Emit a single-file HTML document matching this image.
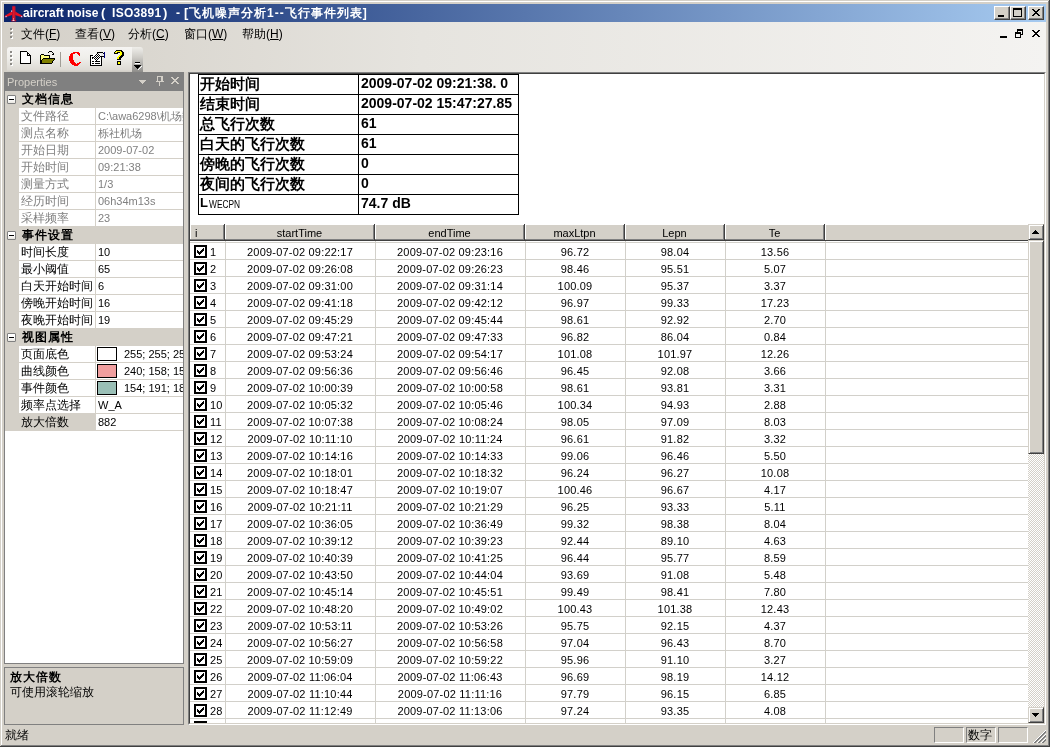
<!DOCTYPE html>
<html><head><meta charset="utf-8">
<style>
*{margin:0;padding:0;box-sizing:border-box}
html,body{width:1050px;height:747px;overflow:hidden;background:#d4d0c8;font-family:"Liberation Sans",sans-serif;font-size:11px;color:#000;position:relative}
.a{position:absolute}
.tt{color:#fff;font-weight:bold;font-size:12px;line-height:12px}
.t{position:absolute;white-space:nowrap;line-height:1}
#title{left:4px;top:4px;width:1042px;height:18px;background:linear-gradient(to right,#0a246a,#a6caf0)}
.tb{position:absolute;top:6px;width:16px;height:14px;background:#d4d0c8;border-top:1px solid #fff;border-left:1px solid #fff;border-right:1px solid #404040;border-bottom:1px solid #404040;box-shadow:inset -1px -1px 0 #808080}
#menubar{left:4px;top:22px;width:1042px;height:50px;background:linear-gradient(to right,#d4d0c8 0%,#e6e4df 40%,#f4f3f1 100%)}
.mi{position:absolute;top:28px;font-size:12px;line-height:12px}
#toolbar{left:7px;top:47px;width:125px;height:25px;border-radius:3px 0 0 0;background:linear-gradient(to bottom,#f6f5f3 0%,#efeeea 45%,#dedbd5 90%,#cfccc5 100%)}
#tbover{left:132px;top:47px;width:11px;height:25px;border-radius:0 3px 0 0;background:linear-gradient(to bottom,#efeeea 0%,#cfcdc8 40%,#8e8d8a 100%)}
#prophdr{left:4px;top:72px;width:180px;height:18px;background:#808080}
#pgrid{left:4px;top:90px;width:180px;height:574px;border:1px solid #808080;background:#fff}
.pcat{position:absolute;left:5px;width:178px;height:17px;background:#d4d0c8}
.pcatt{position:absolute;left:17px;top:2px;font-size:12px;line-height:12px;font-weight:bold;letter-spacing:1px;white-space:nowrap}
.mbox{position:absolute;left:2px;top:4px;width:9px;height:9px;border:1px solid #808080;border-radius:1px;background:linear-gradient(to bottom,#fff 50%,#e8e6e0)}
.mminus{position:absolute;left:1px;top:3px;width:5px;height:1px;background:#000}
.prow{position:absolute;left:5px;width:178px;height:17px;background:#d4d0c8}
.pname{position:absolute;left:14px;top:0;width:76px;height:16px;font-size:12px;line-height:12px;padding:2px 0 0 2px;white-space:nowrap;overflow:hidden}
.pval{position:absolute;left:91px;top:0;width:87px;height:16px;background:#fff;white-space:nowrap;overflow:hidden}
.pvt{position:absolute;left:2px;top:2px;font-size:11px;line-height:12px}
.sw{position:absolute;left:1px;top:1px;width:20px;height:14px;border:1px solid #000}
#desc{left:4px;top:667px;width:180px;height:58px;border:1px solid #808080;background:#d4d0c8}
#mainv{left:188px;top:72px;width:858px;height:653px;border-top:1px solid #808080;border-left:1px solid #808080;border-right:1px solid #fff;border-bottom:1px solid #fff}
#maini{left:189px;top:73px;width:856px;height:651px;border-top:1px solid #404040;border-left:1px solid #404040;border-right:1px solid #d4d0c8;border-bottom:1px solid #d4d0c8;background:#fff}
.sb{position:absolute;top:727px;height:16px;border-top:1px solid #808080;border-left:1px solid #808080;border-right:1px solid #fff;border-bottom:1px solid #fff}
.st1{position:absolute;left:200px;font-size:15px;line-height:15px;font-weight:bold;white-space:nowrap}
.st2{position:absolute;left:361px;font-size:14px;line-height:14px;font-weight:bold;white-space:nowrap}
.lh{position:absolute;top:225px;height:16px;background:#d4d0c8;border-right:1px solid #404040;border-bottom:1px solid #404040;box-shadow:inset -1px -1px 0 #808080, inset 1px 0 0 #fff;font-size:11px;line-height:16px;text-align:center}
.gl{position:absolute;left:190px;width:838px;height:1px;background:#d2d0ca}
.vl{position:absolute;top:241px;width:1px;height:482px;background:#d2d0ca}
.lr{position:absolute;left:190px;width:838px;height:16px;font-size:11px;line-height:18px;letter-spacing:0.2px}
.lr span{position:absolute;top:0;text-align:center;white-space:nowrap}
.lr .cb{left:4px;top:2px;width:13px;height:13px;border:2px solid #000;background:#fff}
.ck{position:absolute;left:1px;top:1px}
.lr .c0{left:20px;text-align:left}
.lr .c1{left:35px;width:150px}
.lr .c2{left:185px;width:150px}
.lr .c3{left:335px;width:100px}
.lr .c4{left:435px;width:100px}
.lr .c5{left:535px;width:100px}
#vsb{left:1028px;top:224px;width:16px;height:499px;background:repeating-conic-gradient(#d4d0c8 0 25%,#fff 0 50%) 0 0/2px 2px}
.sbtn{position:absolute;left:1028px;width:16px;height:16px;background:#d4d0c8;border-top:1px solid #d4d0c8;border-left:1px solid #d4d0c8;border-right:1px solid #404040;border-bottom:1px solid #404040;box-shadow:inset 1px 1px 0 #fff, inset -1px -1px 0 #808080}
.wrap{position:absolute;left:0;top:0;width:1050px;height:747px;will-change:transform}
</style></head><body><div class="wrap">
<!-- window frame -->
<div class="a" style="left:1px;top:1px;width:1px;height:744px;background:#fff"></div>
<div class="a" style="left:1px;top:1px;width:1047px;height:1px;background:#fff"></div>
<div class="a" style="left:1048px;top:1px;width:1px;height:745px;background:#808080"></div>
<div class="a" style="left:1049px;top:0;width:1px;height:747px;background:#404040"></div>
<div class="a" style="left:1px;top:745px;width:1048px;height:1px;background:#808080"></div>
<div class="a" style="left:0;top:746px;width:1050px;height:1px;background:#404040"></div>

<div id="title" class="a"></div>
<div class="t tt" style="left:23px;top:7px">aircraft noise</div>
<div class="t tt" style="left:101px;top:6px;font-size:13px">(</div>
<div class="t tt" style="left:112px;top:7px;letter-spacing:0.3px">ISO3891</div>
<div class="t tt" style="left:163px;top:6px;font-size:13px">)</div>
<div class="t tt" style="left:176px;top:7px">-</div>
<div class="t tt" style="left:184px;top:6px;font-size:13px">[</div>
<div class="t tt" style="left:189px;top:7px;letter-spacing:1px">飞机噪声分析1--飞行事件列表]</div>
<div class="tb" style="left:994px"></div>
<div class="tb" style="left:1010px"></div>
<div class="tb" style="left:1028px"></div>

<div id="menubar" class="a"></div>
<!-- plane icon -->
<svg class="a" style="left:4px;top:4px" width="20" height="18" viewBox="0 0 20 18">
<path d="M9.5 6.5 L18.5 11.8 L18.5 13.5 L9.5 10.5 L0.8 13.5 L0.8 11.8 Z" fill="#e81020"/>
<path d="M8 2.5 Q9.7 0.8 11.5 2.5 L11.5 16 L8 16 Z" fill="#b01438"/>
<rect x="9" y="3" width="1.5" height="12" fill="#e01828"/>
<path d="M7 16 L12.5 16 L12 17.6 L7.5 17.6 Z" fill="#a01030"/>
<rect x="1.5" y="12" width="1.2" height="1.2" fill="#c8d0ff"/><rect x="17" y="12" width="1.2" height="1.2" fill="#c8d0ff"/><rect x="7" y="6.5" width="1.2" height="1.2" fill="#ffd0e0"/><rect x="9" y="14.5" width="1" height="1" fill="#ffd0e0"/><rect x="8.5" y="16" width="2" height="1" fill="#ffc0d0"/>
</svg>
<!-- title buttons glyphs -->
<div class="a" style="left:998px;top:15px;width:6px;height:2px;background:#000"></div>
<div class="a" style="left:1013px;top:8px;width:9px;height:9px;border:1px solid #000;border-top-width:2px"></div>
<svg class="a" style="left:1032px;top:9px" width="8" height="7" viewBox="0 0 8 7" shape-rendering="crispEdges"><path d="M0 0h2v1h-2zM6 0h2v1h-2zM1 1h2v1h-2zM5 1h2v1h-2zM2 2h4v1h-4zM3 3h2v1h-2zM2 4h4v1h-4zM1 5h2v1h-2zM5 5h2v1h-2zM0 6h2v1h-2zM6 6h2v1h-2z" fill="#000"/></svg>
<!-- MDI buttons -->
<div class="a" style="left:1000px;top:36px;width:7px;height:2px;background:#000"></div>
<div class="a" style="left:1017px;top:29px;width:6px;height:6px;border:1px solid #000;border-top-width:2px"></div>
<div class="a" style="left:1015px;top:32px;width:6px;height:6px;border:1px solid #000;border-top-width:2px;background:#f4f3f1"></div>
<svg class="a" style="left:1032px;top:30px" width="8" height="7" viewBox="0 0 8 7" shape-rendering="crispEdges"><path d="M0 0h2v1h-2zM6 0h2v1h-2zM1 1h2v1h-2zM5 1h2v1h-2zM2 2h4v1h-4zM3 3h2v1h-2zM2 4h4v1h-4zM1 5h2v1h-2zM5 5h2v1h-2zM0 6h2v1h-2zM6 6h2v1h-2z" fill="#000"/></svg>
<!-- menu grip -->
<svg class="a" style="left:10px;top:28px" width="3" height="11" shape-rendering="crispEdges"><path d="M1 1h2v2h-2zM1 5h2v2h-2zM1 9h2v2h-2z" fill="#fff"/><path d="M0 0h2v2h-2zM0 4h2v2h-2zM0 8h2v2h-2z" fill="#8c8a86"/></svg>

<div class="mi" style="left:21px">文件(<u>F</u>)</div>
<div class="mi" style="left:75px">查看(<u>V</u>)</div>
<div class="mi" style="left:128px">分析(<u>C</u>)</div>
<div class="mi" style="left:184px">窗口(<u>W</u>)</div>
<div class="mi" style="left:242px">帮助(<u>H</u>)</div>

<div id="toolbar" class="a"></div>
<div id="tbover" class="a"></div>
<!-- toolbar grip -->
<svg class="a" style="left:10px;top:51px" width="3" height="15" shape-rendering="crispEdges"><path d="M1 1h2v2h-2zM1 5h2v2h-2zM1 9h2v2h-2zM1 13h2v2h-2z" fill="#fff"/><path d="M0 0h2v2h-2zM0 4h2v2h-2zM0 8h2v2h-2zM0 12h2v2h-2z" fill="#8c8a86"/></svg>
<!-- new doc -->
<svg class="a" style="left:20px;top:51px" width="11" height="13" shape-rendering="crispEdges"><path d="M1 1h6v1h1v1h1v1h1v8h-9z" fill="#fff"/><path d="M0 0h7v1h-6v11h9v-8h1v9h-11zM7 1h1v1h-1zM8 2h1v1h-1zM9 3h1v1h-1zM7 1h1v3h2v1h-3z" fill="#000"/></svg>
<!-- open folder -->
<svg class="a" style="left:40px;top:50px" width="16" height="14" shape-rendering="crispEdges">
<path d="M9 1h3v1h-3zM12 2h1v1h-1zM13 3h1v2h-1zM12 4h1v1h-1zM8 2h1v1h-1z" fill="#000"/>
<path d="M1 4h3v1h-3zM0 5h1v9h-1zM4 5h5v1h-5zM9 5h1v3h-1zM1 13h11v1h-11zM3 8h12v1h-12zM14 9h1v1h-1zM13 10h1v1h-1zM12 11h1v2h-1zM2 9h1v1h-1zM1 10h1v3h-1z" fill="#000"/>
<path d="M1 5h3v1h5v2h-6v1h-1v1h-1z" fill="#ffff80"/>
<path d="M3 9h11v1h-1v1h-1v2h-10v-3h1z" fill="#808000"/>
</svg>
<div class="a" style="left:60px;top:52px;width:1px;height:15px;background:#a09d96"></div>
<!-- C -->
<svg class="a" style="left:68px;top:51px" width="14" height="16" shape-rendering="crispEdges"><path d="M5 1h6v1h-6zM3 2h4v1h-4zM9 2h3v1h-3zM2 3h3v1h-3zM10 3h2v1h-2zM2 4h3v1h-3zM11 4h1v1h-1zM1 5h4v1h-4zM1 6h4v1h-4zM1 7h4v1h-4zM1 8h4v1h-4zM1 9h5v1h-5zM2 10h4v1h-4zM2 11h5v1h-5zM11 11h2v1h-2zM3 12h5v1h-5zM9 12h3v1h-3zM4 13h7v1h-7zM6 14h4v1h-4z" fill="#f00"/></svg>
<!-- properties icon -->
<svg class="a" style="left:88px;top:50px" width="18" height="18" shape-rendering="crispEdges">
<path d="M2 5h12v11h-12z" fill="#000"/><path d="M3 6h10v9h-10z" fill="#fff"/>
<path d="M4 11h2v1h-2zM7 11h5v1h-5zM4 13h2v1h-2zM7 13h5v1h-5zM4 7h1v2h-1zM5 8h1v1h-1z" fill="#000"/>
<path d="M9 2h6v1h-6z" fill="#000"/><path d="M10 3h5v3h-5z" fill="#e8e8e8"/><path d="M16 2h1v6h-1z" fill="#000080"/><path d="M15 3h1v1h-1zM15 6h1v1h-1zM12 6h3v1h-3z" fill="#000"/>
<path d="M5 4h8v5h-8z" fill="#fff"/>
<path d="M9 3h1v1h-1zM8 4h1v1h-1zM10 4h1v1h-1zM7 5h1v1h-1zM9 5h1v1h-1zM11 5h1v1h-1zM6 6h1v1h-1zM8 6h1v1h-1zM10 6h1v1h-1zM12 6h1v1h-1zM5 7h1v1h-1zM7 7h1v1h-1zM9 7h1v1h-1zM11 7h1v1h-1zM6 8h1v1h-1zM8 8h1v1h-1zM10 8h1v1h-1zM7 9h1v1h-1zM9 9h1v1h-1zM8 10h1v1h-1z" fill="#000"/>
</svg>
<!-- help ? -->
<svg class="a" style="left:113px;top:50px" width="12" height="15" shape-rendering="crispEdges">
<path d="M3 0h6v1h1v1h1v4h-1v1h-1v1h-1v2h-4v-3h1v-1h1v-1h1v-2h-2v1h-4v-2h1v-1h1z" fill="#000"/>
<path d="M4 1h4v1h1v3h-1v1h-1v1h-1v2h-2v-2h1v-1h1v-1h1v-3h-3v1h-2v-1h1v-1h1z" fill="#ffff00"/>
<path d="M4 11h4v4h-4z" fill="#000"/><path d="M5 12h2v2h-2z" fill="#ffff00"/>
</svg>
<!-- overflow glyph -->
<svg class="a" style="left:134px;top:62px" width="8" height="8" shape-rendering="crispEdges"><path d="M1 0h5v1h-5zM0 3h7v1h-7zM1 4h5v1h-5zM2 5h3v1h-3zM3 6h1v1h-1z" fill="#000"/><path d="M1 1h5v1h-5zM7 4h1v1h-1zM6 5h1v1h-1zM5 6h1v1h-1zM4 7h1v1h-1z" fill="#fff"/></svg>


<div id="prophdr" class="a"></div>
<div class="t" style="left:7px;top:77px;color:#d4d0c8;font-size:11px">Properties</div>

<svg class="a" style="left:139px;top:80px" width="8" height="4" shape-rendering="crispEdges"><path d="M0 0h7v1h-7zM1 1h5v1h-5zM2 2h3v1h-3zM3 3h1v1h-1z" fill="#d4d0c8"/></svg>
<svg class="a" style="left:156px;top:76px" width="8" height="10" shape-rendering="crispEdges"><path d="M1 0h6v1h-6zM1 1h1v4h-1zM5 1h2v4h-2zM0 5h8v1h-8zM3 6h1v4h-1z" fill="#d4d0c8"/></svg>
<svg class="a" style="left:171px;top:77px" width="8" height="7" shape-rendering="crispEdges"><path d="M0 0h2v1h-2zM6 0h2v1h-2zM1 1h2v1h-2zM5 1h2v1h-2zM2 2h4v1h-4zM3 3h2v1h-2zM2 4h4v1h-4zM1 5h2v1h-2zM5 5h2v1h-2zM0 6h2v1h-2zM6 6h2v1h-2z" fill="#d4d0c8"/></svg>
<div id="pgrid" class="a"></div>
<div id="desc" class="a"></div>
<div class="t" style="left:10px;top:671px;font-size:12px;font-weight:bold;letter-spacing:1px">放大倍数</div>
<div class="t" style="left:10px;top:686px;font-size:12px">可使用滚轮缩放</div>

<div id="mainv" class="a"></div>
<div id="maini" class="a"></div>

<div class="a" style="left:198px;top:74px;width:321px;height:141px;border:1px solid #000"></div>
<div class="a" style="left:358px;top:74px;width:1px;height:141px;background:#000"></div>
<div class="a" style="left:198px;top:94px;width:321px;height:1px;background:#000"></div>
<div class="a" style="left:198px;top:114px;width:321px;height:1px;background:#000"></div>
<div class="a" style="left:198px;top:134px;width:321px;height:1px;background:#000"></div>
<div class="a" style="left:198px;top:154px;width:321px;height:1px;background:#000"></div>
<div class="a" style="left:198px;top:174px;width:321px;height:1px;background:#000"></div>
<div class="a" style="left:198px;top:194px;width:321px;height:1px;background:#000"></div>
<div class="st1" style="top:76px">开始时间</div><div class="st2" style="top:calc(77px - 1px)">2009-07-02 09:21:38. 0</div>
<div class="st1" style="top:96px">结束时间</div><div class="st2" style="top:calc(97px - 1px)">2009-07-02 15:47:27.85</div>
<div class="st1" style="top:116px">总飞行次数</div><div class="st2" style="top:calc(117px - 1px)">61</div>
<div class="st1" style="top:136px">白天的飞行次数</div><div class="st2" style="top:calc(137px - 1px)">61</div>
<div class="st1" style="top:156px">傍晚的飞行次数</div><div class="st2" style="top:calc(157px - 1px)">0</div>
<div class="st1" style="top:176px">夜间的飞行次数</div><div class="st2" style="top:calc(177px - 1px)">0</div>
<div class="t" style="left:200px;top:197px;font-size:13px;line-height:12px;font-weight:bold">L</div><div class="t" style="left:209px;top:199px;font-size:11px;line-height:10px;transform:scaleX(0.76);transform-origin:0 0">WECPN</div>
<div class="st2" style="top:calc(197px - 1px)">74.7 dB</div>

<div class="lh" style="left:190px;width:35px;text-align:left;padding-left:5px">i</div>
<div class="lh" style="left:225px;width:150px">startTime</div>
<div class="lh" style="left:375px;width:150px">endTime</div>
<div class="lh" style="left:525px;width:100px">maxLtpn</div>
<div class="lh" style="left:625px;width:100px">Lepn</div>
<div class="lh" style="left:725px;width:100px">Te</div>
<div class="a" style="left:224px;top:224px;width:1px;height:1px;background:#404040"></div><div class="a" style="left:374px;top:224px;width:1px;height:1px;background:#404040"></div><div class="a" style="left:524px;top:224px;width:1px;height:1px;background:#404040"></div><div class="a" style="left:624px;top:224px;width:1px;height:1px;background:#404040"></div><div class="a" style="left:724px;top:224px;width:1px;height:1px;background:#404040"></div><div class="a" style="left:824px;top:224px;width:1px;height:1px;background:#404040"></div>
<div class="lh" style="left:825px;width:203px;border-right:none;box-shadow:inset 1px 0 0 #fff">&nbsp;</div>

<div class="pcat" style="top:91px"><div class="mbox"><div class="mminus"></div></div><span class="pcatt">文档信息</span></div>
<div class="prow" style="top:108px"><div class="pname" style="background:#fff;color:#808080">文件路径</div><div class="pval" style="color:#808080">
<span class="pvt">C:\awa6298\机场数据</span>
</div></div>
<div class="prow" style="top:125px"><div class="pname" style="background:#fff;color:#808080">测点名称</div><div class="pval" style="color:#808080">
<span class="pvt">栎社机场</span>
</div></div>
<div class="prow" style="top:142px"><div class="pname" style="background:#fff;color:#808080">开始日期</div><div class="pval" style="color:#808080">
<span class="pvt">2009-07-02</span>
</div></div>
<div class="prow" style="top:159px"><div class="pname" style="background:#fff;color:#808080">开始时间</div><div class="pval" style="color:#808080">
<span class="pvt">09:21:38</span>
</div></div>
<div class="prow" style="top:176px"><div class="pname" style="background:#fff;color:#808080">测量方式</div><div class="pval" style="color:#808080">
<span class="pvt">1/3</span>
</div></div>
<div class="prow" style="top:193px"><div class="pname" style="background:#fff;color:#808080">经历时间</div><div class="pval" style="color:#808080">
<span class="pvt">06h34m13s</span>
</div></div>
<div class="prow" style="top:210px"><div class="pname" style="background:#fff;color:#808080">采样频率</div><div class="pval" style="color:#808080">
<span class="pvt">23</span>
</div></div>
<div class="pcat" style="top:227px"><div class="mbox"><div class="mminus"></div></div><span class="pcatt">事件设置</span></div>
<div class="prow" style="top:244px"><div class="pname" style="background:#fff;color:#000">时间长度</div><div class="pval" style="color:#000">
<span class="pvt">10</span>
</div></div>
<div class="prow" style="top:261px"><div class="pname" style="background:#fff;color:#000">最小阈值</div><div class="pval" style="color:#000">
<span class="pvt">65</span>
</div></div>
<div class="prow" style="top:278px"><div class="pname" style="background:#fff;color:#000">白天开始时间</div><div class="pval" style="color:#000">
<span class="pvt">6</span>
</div></div>
<div class="prow" style="top:295px"><div class="pname" style="background:#fff;color:#000">傍晚开始时间</div><div class="pval" style="color:#000">
<span class="pvt">16</span>
</div></div>
<div class="prow" style="top:312px"><div class="pname" style="background:#fff;color:#000">夜晚开始时间</div><div class="pval" style="color:#000">
<span class="pvt">19</span>
</div></div>
<div class="pcat" style="top:329px"><div class="mbox"><div class="mminus"></div></div><span class="pcatt">视图属性</span></div>
<div class="prow" style="top:346px"><div class="pname" style="background:#fff;color:#000">页面底色</div><div class="pval" style="color:#000">
<span class="sw" style="background:#ffffff"></span><span class="pvt" style="left:28px">255; 255; 255</span>
</div></div>
<div class="prow" style="top:363px"><div class="pname" style="background:#fff;color:#000">曲线颜色</div><div class="pval" style="color:#000">
<span class="sw" style="background:#f09e9e"></span><span class="pvt" style="left:28px">240; 158; 158</span>
</div></div>
<div class="prow" style="top:380px"><div class="pname" style="background:#fff;color:#000">事件颜色</div><div class="pval" style="color:#000">
<span class="sw" style="background:#9abfb6"></span><span class="pvt" style="left:28px">154; 191; 182</span>
</div></div>
<div class="prow" style="top:397px"><div class="pname" style="background:#fff;color:#000">频率点选择</div><div class="pval" style="color:#000">
<span class="pvt">W_A</span>
</div></div>
<div class="prow" style="top:414px"><div class="pname" style="background:#d4d0c8;color:#000">放大倍数</div><div class="pval" style="color:#000">
<span class="pvt">882</span>
</div></div>
<div class="gl" style="top:242px"></div>
<div class="gl" style="top:259px"></div>
<div class="gl" style="top:276px"></div>
<div class="gl" style="top:293px"></div>
<div class="gl" style="top:310px"></div>
<div class="gl" style="top:327px"></div>
<div class="gl" style="top:344px"></div>
<div class="gl" style="top:361px"></div>
<div class="gl" style="top:378px"></div>
<div class="gl" style="top:395px"></div>
<div class="gl" style="top:412px"></div>
<div class="gl" style="top:429px"></div>
<div class="gl" style="top:446px"></div>
<div class="gl" style="top:463px"></div>
<div class="gl" style="top:480px"></div>
<div class="gl" style="top:497px"></div>
<div class="gl" style="top:514px"></div>
<div class="gl" style="top:531px"></div>
<div class="gl" style="top:548px"></div>
<div class="gl" style="top:565px"></div>
<div class="gl" style="top:582px"></div>
<div class="gl" style="top:599px"></div>
<div class="gl" style="top:616px"></div>
<div class="gl" style="top:633px"></div>
<div class="gl" style="top:650px"></div>
<div class="gl" style="top:667px"></div>
<div class="gl" style="top:684px"></div>
<div class="gl" style="top:701px"></div>
<div class="gl" style="top:718px"></div>
<div class="vl" style="left:225px"></div>
<div class="vl" style="left:375px"></div>
<div class="vl" style="left:525px"></div>
<div class="vl" style="left:625px"></div>
<div class="vl" style="left:725px"></div>
<div class="vl" style="left:825px"></div>
<div class="lr" style="top:243px"><span class="cb"><svg class="ck" width="7" height="7" viewBox="0 0 7 7" shape-rendering="crispEdges"><path d="M6 0h1v3h-1zM5 1h1v3h-1zM0 2h1v3h-1zM1 3h1v3h-1zM4 2h1v3h-1zM3 3h1v3h-1zM2 4h1v3h-1z" fill="#000"/></svg></span><span class="c0">1</span><span class="c1">2009-07-02 09:22:17</span><span class="c2">2009-07-02 09:23:16</span><span class="c3">96.72</span><span class="c4">98.04</span><span class="c5">13.56</span></div>
<div class="lr" style="top:260px"><span class="cb"><svg class="ck" width="7" height="7" viewBox="0 0 7 7" shape-rendering="crispEdges"><path d="M6 0h1v3h-1zM5 1h1v3h-1zM0 2h1v3h-1zM1 3h1v3h-1zM4 2h1v3h-1zM3 3h1v3h-1zM2 4h1v3h-1z" fill="#000"/></svg></span><span class="c0">2</span><span class="c1">2009-07-02 09:26:08</span><span class="c2">2009-07-02 09:26:23</span><span class="c3">98.46</span><span class="c4">95.51</span><span class="c5">5.07</span></div>
<div class="lr" style="top:277px"><span class="cb"><svg class="ck" width="7" height="7" viewBox="0 0 7 7" shape-rendering="crispEdges"><path d="M6 0h1v3h-1zM5 1h1v3h-1zM0 2h1v3h-1zM1 3h1v3h-1zM4 2h1v3h-1zM3 3h1v3h-1zM2 4h1v3h-1z" fill="#000"/></svg></span><span class="c0">3</span><span class="c1">2009-07-02 09:31:00</span><span class="c2">2009-07-02 09:31:14</span><span class="c3">100.09</span><span class="c4">95.37</span><span class="c5">3.37</span></div>
<div class="lr" style="top:294px"><span class="cb"><svg class="ck" width="7" height="7" viewBox="0 0 7 7" shape-rendering="crispEdges"><path d="M6 0h1v3h-1zM5 1h1v3h-1zM0 2h1v3h-1zM1 3h1v3h-1zM4 2h1v3h-1zM3 3h1v3h-1zM2 4h1v3h-1z" fill="#000"/></svg></span><span class="c0">4</span><span class="c1">2009-07-02 09:41:18</span><span class="c2">2009-07-02 09:42:12</span><span class="c3">96.97</span><span class="c4">99.33</span><span class="c5">17.23</span></div>
<div class="lr" style="top:311px"><span class="cb"><svg class="ck" width="7" height="7" viewBox="0 0 7 7" shape-rendering="crispEdges"><path d="M6 0h1v3h-1zM5 1h1v3h-1zM0 2h1v3h-1zM1 3h1v3h-1zM4 2h1v3h-1zM3 3h1v3h-1zM2 4h1v3h-1z" fill="#000"/></svg></span><span class="c0">5</span><span class="c1">2009-07-02 09:45:29</span><span class="c2">2009-07-02 09:45:44</span><span class="c3">98.61</span><span class="c4">92.92</span><span class="c5">2.70</span></div>
<div class="lr" style="top:328px"><span class="cb"><svg class="ck" width="7" height="7" viewBox="0 0 7 7" shape-rendering="crispEdges"><path d="M6 0h1v3h-1zM5 1h1v3h-1zM0 2h1v3h-1zM1 3h1v3h-1zM4 2h1v3h-1zM3 3h1v3h-1zM2 4h1v3h-1z" fill="#000"/></svg></span><span class="c0">6</span><span class="c1">2009-07-02 09:47:21</span><span class="c2">2009-07-02 09:47:33</span><span class="c3">96.82</span><span class="c4">86.04</span><span class="c5">0.84</span></div>
<div class="lr" style="top:345px"><span class="cb"><svg class="ck" width="7" height="7" viewBox="0 0 7 7" shape-rendering="crispEdges"><path d="M6 0h1v3h-1zM5 1h1v3h-1zM0 2h1v3h-1zM1 3h1v3h-1zM4 2h1v3h-1zM3 3h1v3h-1zM2 4h1v3h-1z" fill="#000"/></svg></span><span class="c0">7</span><span class="c1">2009-07-02 09:53:24</span><span class="c2">2009-07-02 09:54:17</span><span class="c3">101.08</span><span class="c4">101.97</span><span class="c5">12.26</span></div>
<div class="lr" style="top:362px"><span class="cb"><svg class="ck" width="7" height="7" viewBox="0 0 7 7" shape-rendering="crispEdges"><path d="M6 0h1v3h-1zM5 1h1v3h-1zM0 2h1v3h-1zM1 3h1v3h-1zM4 2h1v3h-1zM3 3h1v3h-1zM2 4h1v3h-1z" fill="#000"/></svg></span><span class="c0">8</span><span class="c1">2009-07-02 09:56:36</span><span class="c2">2009-07-02 09:56:46</span><span class="c3">96.45</span><span class="c4">92.08</span><span class="c5">3.66</span></div>
<div class="lr" style="top:379px"><span class="cb"><svg class="ck" width="7" height="7" viewBox="0 0 7 7" shape-rendering="crispEdges"><path d="M6 0h1v3h-1zM5 1h1v3h-1zM0 2h1v3h-1zM1 3h1v3h-1zM4 2h1v3h-1zM3 3h1v3h-1zM2 4h1v3h-1z" fill="#000"/></svg></span><span class="c0">9</span><span class="c1">2009-07-02 10:00:39</span><span class="c2">2009-07-02 10:00:58</span><span class="c3">98.61</span><span class="c4">93.81</span><span class="c5">3.31</span></div>
<div class="lr" style="top:396px"><span class="cb"><svg class="ck" width="7" height="7" viewBox="0 0 7 7" shape-rendering="crispEdges"><path d="M6 0h1v3h-1zM5 1h1v3h-1zM0 2h1v3h-1zM1 3h1v3h-1zM4 2h1v3h-1zM3 3h1v3h-1zM2 4h1v3h-1z" fill="#000"/></svg></span><span class="c0">10</span><span class="c1">2009-07-02 10:05:32</span><span class="c2">2009-07-02 10:05:46</span><span class="c3">100.34</span><span class="c4">94.93</span><span class="c5">2.88</span></div>
<div class="lr" style="top:413px"><span class="cb"><svg class="ck" width="7" height="7" viewBox="0 0 7 7" shape-rendering="crispEdges"><path d="M6 0h1v3h-1zM5 1h1v3h-1zM0 2h1v3h-1zM1 3h1v3h-1zM4 2h1v3h-1zM3 3h1v3h-1zM2 4h1v3h-1z" fill="#000"/></svg></span><span class="c0">11</span><span class="c1">2009-07-02 10:07:38</span><span class="c2">2009-07-02 10:08:24</span><span class="c3">98.05</span><span class="c4">97.09</span><span class="c5">8.03</span></div>
<div class="lr" style="top:430px"><span class="cb"><svg class="ck" width="7" height="7" viewBox="0 0 7 7" shape-rendering="crispEdges"><path d="M6 0h1v3h-1zM5 1h1v3h-1zM0 2h1v3h-1zM1 3h1v3h-1zM4 2h1v3h-1zM3 3h1v3h-1zM2 4h1v3h-1z" fill="#000"/></svg></span><span class="c0">12</span><span class="c1">2009-07-02 10:11:10</span><span class="c2">2009-07-02 10:11:24</span><span class="c3">96.61</span><span class="c4">91.82</span><span class="c5">3.32</span></div>
<div class="lr" style="top:447px"><span class="cb"><svg class="ck" width="7" height="7" viewBox="0 0 7 7" shape-rendering="crispEdges"><path d="M6 0h1v3h-1zM5 1h1v3h-1zM0 2h1v3h-1zM1 3h1v3h-1zM4 2h1v3h-1zM3 3h1v3h-1zM2 4h1v3h-1z" fill="#000"/></svg></span><span class="c0">13</span><span class="c1">2009-07-02 10:14:16</span><span class="c2">2009-07-02 10:14:33</span><span class="c3">99.06</span><span class="c4">96.46</span><span class="c5">5.50</span></div>
<div class="lr" style="top:464px"><span class="cb"><svg class="ck" width="7" height="7" viewBox="0 0 7 7" shape-rendering="crispEdges"><path d="M6 0h1v3h-1zM5 1h1v3h-1zM0 2h1v3h-1zM1 3h1v3h-1zM4 2h1v3h-1zM3 3h1v3h-1zM2 4h1v3h-1z" fill="#000"/></svg></span><span class="c0">14</span><span class="c1">2009-07-02 10:18:01</span><span class="c2">2009-07-02 10:18:32</span><span class="c3">96.24</span><span class="c4">96.27</span><span class="c5">10.08</span></div>
<div class="lr" style="top:481px"><span class="cb"><svg class="ck" width="7" height="7" viewBox="0 0 7 7" shape-rendering="crispEdges"><path d="M6 0h1v3h-1zM5 1h1v3h-1zM0 2h1v3h-1zM1 3h1v3h-1zM4 2h1v3h-1zM3 3h1v3h-1zM2 4h1v3h-1z" fill="#000"/></svg></span><span class="c0">15</span><span class="c1">2009-07-02 10:18:47</span><span class="c2">2009-07-02 10:19:07</span><span class="c3">100.46</span><span class="c4">96.67</span><span class="c5">4.17</span></div>
<div class="lr" style="top:498px"><span class="cb"><svg class="ck" width="7" height="7" viewBox="0 0 7 7" shape-rendering="crispEdges"><path d="M6 0h1v3h-1zM5 1h1v3h-1zM0 2h1v3h-1zM1 3h1v3h-1zM4 2h1v3h-1zM3 3h1v3h-1zM2 4h1v3h-1z" fill="#000"/></svg></span><span class="c0">16</span><span class="c1">2009-07-02 10:21:11</span><span class="c2">2009-07-02 10:21:29</span><span class="c3">96.25</span><span class="c4">93.33</span><span class="c5">5.11</span></div>
<div class="lr" style="top:515px"><span class="cb"><svg class="ck" width="7" height="7" viewBox="0 0 7 7" shape-rendering="crispEdges"><path d="M6 0h1v3h-1zM5 1h1v3h-1zM0 2h1v3h-1zM1 3h1v3h-1zM4 2h1v3h-1zM3 3h1v3h-1zM2 4h1v3h-1z" fill="#000"/></svg></span><span class="c0">17</span><span class="c1">2009-07-02 10:36:05</span><span class="c2">2009-07-02 10:36:49</span><span class="c3">99.32</span><span class="c4">98.38</span><span class="c5">8.04</span></div>
<div class="lr" style="top:532px"><span class="cb"><svg class="ck" width="7" height="7" viewBox="0 0 7 7" shape-rendering="crispEdges"><path d="M6 0h1v3h-1zM5 1h1v3h-1zM0 2h1v3h-1zM1 3h1v3h-1zM4 2h1v3h-1zM3 3h1v3h-1zM2 4h1v3h-1z" fill="#000"/></svg></span><span class="c0">18</span><span class="c1">2009-07-02 10:39:12</span><span class="c2">2009-07-02 10:39:23</span><span class="c3">92.44</span><span class="c4">89.10</span><span class="c5">4.63</span></div>
<div class="lr" style="top:549px"><span class="cb"><svg class="ck" width="7" height="7" viewBox="0 0 7 7" shape-rendering="crispEdges"><path d="M6 0h1v3h-1zM5 1h1v3h-1zM0 2h1v3h-1zM1 3h1v3h-1zM4 2h1v3h-1zM3 3h1v3h-1zM2 4h1v3h-1z" fill="#000"/></svg></span><span class="c0">19</span><span class="c1">2009-07-02 10:40:39</span><span class="c2">2009-07-02 10:41:25</span><span class="c3">96.44</span><span class="c4">95.77</span><span class="c5">8.59</span></div>
<div class="lr" style="top:566px"><span class="cb"><svg class="ck" width="7" height="7" viewBox="0 0 7 7" shape-rendering="crispEdges"><path d="M6 0h1v3h-1zM5 1h1v3h-1zM0 2h1v3h-1zM1 3h1v3h-1zM4 2h1v3h-1zM3 3h1v3h-1zM2 4h1v3h-1z" fill="#000"/></svg></span><span class="c0">20</span><span class="c1">2009-07-02 10:43:50</span><span class="c2">2009-07-02 10:44:04</span><span class="c3">93.69</span><span class="c4">91.08</span><span class="c5">5.48</span></div>
<div class="lr" style="top:583px"><span class="cb"><svg class="ck" width="7" height="7" viewBox="0 0 7 7" shape-rendering="crispEdges"><path d="M6 0h1v3h-1zM5 1h1v3h-1zM0 2h1v3h-1zM1 3h1v3h-1zM4 2h1v3h-1zM3 3h1v3h-1zM2 4h1v3h-1z" fill="#000"/></svg></span><span class="c0">21</span><span class="c1">2009-07-02 10:45:14</span><span class="c2">2009-07-02 10:45:51</span><span class="c3">99.49</span><span class="c4">98.41</span><span class="c5">7.80</span></div>
<div class="lr" style="top:600px"><span class="cb"><svg class="ck" width="7" height="7" viewBox="0 0 7 7" shape-rendering="crispEdges"><path d="M6 0h1v3h-1zM5 1h1v3h-1zM0 2h1v3h-1zM1 3h1v3h-1zM4 2h1v3h-1zM3 3h1v3h-1zM2 4h1v3h-1z" fill="#000"/></svg></span><span class="c0">22</span><span class="c1">2009-07-02 10:48:20</span><span class="c2">2009-07-02 10:49:02</span><span class="c3">100.43</span><span class="c4">101.38</span><span class="c5">12.43</span></div>
<div class="lr" style="top:617px"><span class="cb"><svg class="ck" width="7" height="7" viewBox="0 0 7 7" shape-rendering="crispEdges"><path d="M6 0h1v3h-1zM5 1h1v3h-1zM0 2h1v3h-1zM1 3h1v3h-1zM4 2h1v3h-1zM3 3h1v3h-1zM2 4h1v3h-1z" fill="#000"/></svg></span><span class="c0">23</span><span class="c1">2009-07-02 10:53:11</span><span class="c2">2009-07-02 10:53:26</span><span class="c3">95.75</span><span class="c4">92.15</span><span class="c5">4.37</span></div>
<div class="lr" style="top:634px"><span class="cb"><svg class="ck" width="7" height="7" viewBox="0 0 7 7" shape-rendering="crispEdges"><path d="M6 0h1v3h-1zM5 1h1v3h-1zM0 2h1v3h-1zM1 3h1v3h-1zM4 2h1v3h-1zM3 3h1v3h-1zM2 4h1v3h-1z" fill="#000"/></svg></span><span class="c0">24</span><span class="c1">2009-07-02 10:56:27</span><span class="c2">2009-07-02 10:56:58</span><span class="c3">97.04</span><span class="c4">96.43</span><span class="c5">8.70</span></div>
<div class="lr" style="top:651px"><span class="cb"><svg class="ck" width="7" height="7" viewBox="0 0 7 7" shape-rendering="crispEdges"><path d="M6 0h1v3h-1zM5 1h1v3h-1zM0 2h1v3h-1zM1 3h1v3h-1zM4 2h1v3h-1zM3 3h1v3h-1zM2 4h1v3h-1z" fill="#000"/></svg></span><span class="c0">25</span><span class="c1">2009-07-02 10:59:09</span><span class="c2">2009-07-02 10:59:22</span><span class="c3">95.96</span><span class="c4">91.10</span><span class="c5">3.27</span></div>
<div class="lr" style="top:668px"><span class="cb"><svg class="ck" width="7" height="7" viewBox="0 0 7 7" shape-rendering="crispEdges"><path d="M6 0h1v3h-1zM5 1h1v3h-1zM0 2h1v3h-1zM1 3h1v3h-1zM4 2h1v3h-1zM3 3h1v3h-1zM2 4h1v3h-1z" fill="#000"/></svg></span><span class="c0">26</span><span class="c1">2009-07-02 11:06:04</span><span class="c2">2009-07-02 11:06:43</span><span class="c3">96.69</span><span class="c4">98.19</span><span class="c5">14.12</span></div>
<div class="lr" style="top:685px"><span class="cb"><svg class="ck" width="7" height="7" viewBox="0 0 7 7" shape-rendering="crispEdges"><path d="M6 0h1v3h-1zM5 1h1v3h-1zM0 2h1v3h-1zM1 3h1v3h-1zM4 2h1v3h-1zM3 3h1v3h-1zM2 4h1v3h-1z" fill="#000"/></svg></span><span class="c0">27</span><span class="c1">2009-07-02 11:10:44</span><span class="c2">2009-07-02 11:11:16</span><span class="c3">97.79</span><span class="c4">96.15</span><span class="c5">6.85</span></div>
<div class="lr" style="top:702px"><span class="cb"><svg class="ck" width="7" height="7" viewBox="0 0 7 7" shape-rendering="crispEdges"><path d="M6 0h1v3h-1zM5 1h1v3h-1zM0 2h1v3h-1zM1 3h1v3h-1zM4 2h1v3h-1zM3 3h1v3h-1zM2 4h1v3h-1z" fill="#000"/></svg></span><span class="c0">28</span><span class="c1">2009-07-02 11:12:49</span><span class="c2">2009-07-02 11:13:06</span><span class="c3">97.24</span><span class="c4">93.35</span><span class="c5">4.08</span></div>
<div class="lr" style="top:719px;height:4px;overflow:hidden"><span class="cb"><svg class="ck" width="7" height="7" viewBox="0 0 7 7" shape-rendering="crispEdges"><path d="M6 0h1v3h-1zM5 1h1v3h-1zM0 2h1v3h-1zM1 3h1v3h-1zM4 2h1v3h-1zM3 3h1v3h-1zM2 4h1v3h-1z" fill="#000"/></svg></span></div>
<div id="vsb" class="a"></div>
<div class="sbtn" style="top:224px"></div>
<div class="sbtn" style="top:240px;height:214px"></div>
<div class="sbtn" style="top:707px"></div>
<svg class="a" style="left:1032px;top:230px" width="7" height="4" shape-rendering="crispEdges"><path d="M3 0h1v1h-1zM2 1h3v1h-3zM1 2h5v1h-5zM0 3h7v1h-7z" fill="#000"/></svg>
<svg class="a" style="left:1032px;top:713px" width="7" height="4" shape-rendering="crispEdges"><path d="M0 0h7v1h-7zM1 1h5v1h-5zM2 2h3v1h-3zM3 3h1v1h-1z" fill="#000"/></svg>
<div class="sb" style="left:934px;width:30px"></div>
<div class="sb" style="left:966px;width:30px"></div>
<div class="sb" style="left:998px;width:30px"></div>
<div class="t" style="left:968px;top:729px;font-size:12px">数字</div>
<div class="t" style="left:5px;top:729px;font-size:12px">就绪</div>
<svg class="a" style="left:1033px;top:730px" width="13" height="13" shape-rendering="crispEdges"><path d="M0 12h1v1h-1zM1 11h1v1h-1zM2 10h1v1h-1zM3 9h1v1h-1zM4 8h1v1h-1zM5 7h1v1h-1zM6 6h1v1h-1zM7 5h1v1h-1zM8 4h1v1h-1zM9 3h1v1h-1zM10 2h1v1h-1zM11 1h1v1h-1zM12 0h1v1h-1zM4 12h1v1h-1zM5 11h1v1h-1zM6 10h1v1h-1zM7 9h1v1h-1zM8 8h1v1h-1zM9 7h1v1h-1zM10 6h1v1h-1zM11 5h1v1h-1zM12 4h1v1h-1zM8 12h1v1h-1zM9 11h1v1h-1zM10 10h1v1h-1zM11 9h1v1h-1zM12 8h1v1h-1z" fill="#fff"/><path d="M1 12h1v1h-1zM2 11h1v1h-1zM2 12h1v1h-1zM3 10h1v1h-1zM3 11h1v1h-1zM4 9h1v1h-1zM4 10h1v1h-1zM5 8h1v1h-1zM5 9h1v1h-1zM6 7h1v1h-1zM6 8h1v1h-1zM7 6h1v1h-1zM7 7h1v1h-1zM8 5h1v1h-1zM8 6h1v1h-1zM9 4h1v1h-1zM9 5h1v1h-1zM10 3h1v1h-1zM10 4h1v1h-1zM11 2h1v1h-1zM11 3h1v1h-1zM12 1h1v1h-1zM12 2h1v1h-1zM5 12h1v1h-1zM6 11h1v1h-1zM6 12h1v1h-1zM7 10h1v1h-1zM7 11h1v1h-1zM8 9h1v1h-1zM8 10h1v1h-1zM9 8h1v1h-1zM9 9h1v1h-1zM10 7h1v1h-1zM10 8h1v1h-1zM11 6h1v1h-1zM11 7h1v1h-1zM12 5h1v1h-1zM12 6h1v1h-1zM9 12h1v1h-1zM10 11h1v1h-1zM10 12h1v1h-1zM11 10h1v1h-1zM11 11h1v1h-1zM12 9h1v1h-1zM12 10h1v1h-1z" fill="#808080"/></svg>
</div></body></html>
